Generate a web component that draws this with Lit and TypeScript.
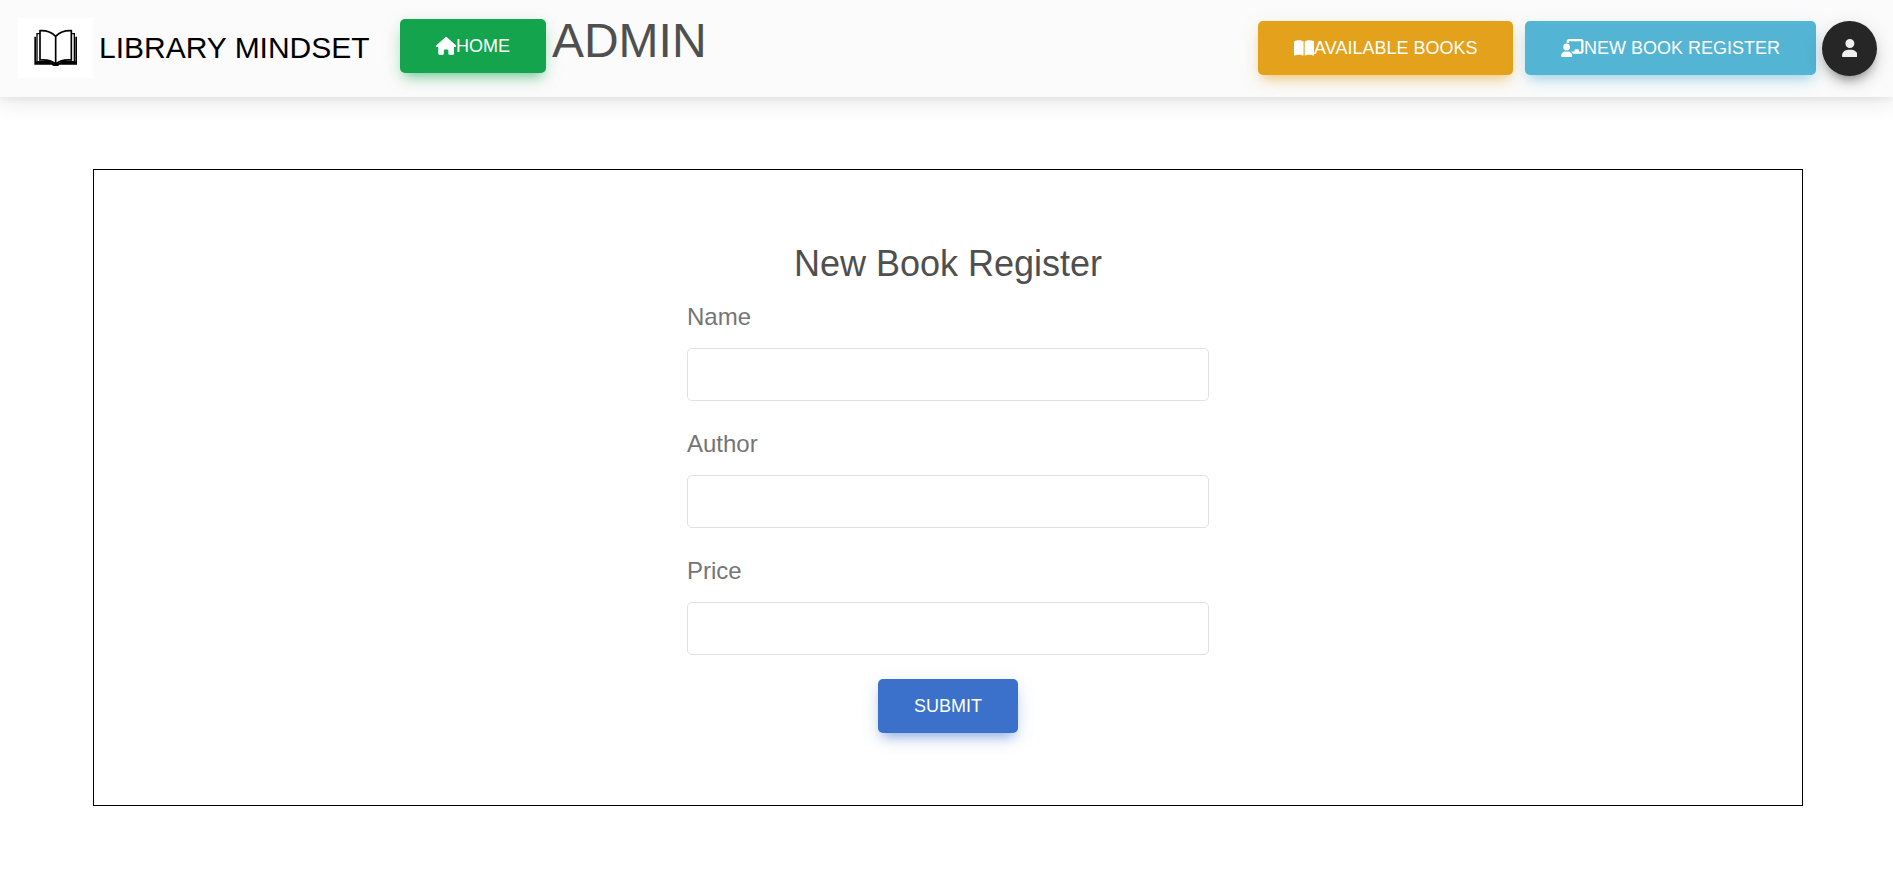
import { LitElement, html, css, svg } from "lit";
import { customElement } from "lit/decorators.js";

const icon = (width: number, path: string) => html`
  <svg class="icon" viewBox="0 0 ${width} 512" aria-hidden="true">${svg`<path d=${path} />`}</svg>
`;

const HOUSE =
  "M575.8 255.5c0 18-15 32.1-32 32.1h-32l.7 160.2c0 2.7-.2 5.4-.5 8.1V472c0 22.1-17.9 40-40 40H456c-1.1 0-2.2 0-3.3-.1c-1.4 .1-2.8 .1-4.2 .1H416 392c-22.1 0-40-17.9-40-40V448 384c0-17.7-14.3-32-32-32H256c-17.7 0-32 14.3-32 32v64 24c0 22.1-17.9 40-40 40H160 128.1c-1.5 0-3-.1-4.5-.2c-1.2 .1-2.4 .2-3.6 .2H104c-22.1 0-40-17.9-40-40V360c0-.9 0-1.9 .1-2.8V287.6H32c-18 0-32-14-32-32.1c0-9 3-17 10-24L266.4 8c7-7 15-8 22-8s15 2 21 7L564.8 231.5c8 7 12 15 11 24z";
const BOOK_OPEN =
  "M249.6 471.5c10.8 3.8 22.4-4.1 22.4-15.5V78.6c0-4.2-1.6-8.4-5-11C247.4 52 202.4 32 144 32C93.5 32 46.3 45.3 18.1 56.1C6.8 60.5 0 71.7 0 83.8V454.1c0 11.9 12.8 20.2 24.1 16.5C55.6 460.1 105.5 448 144 448c33.9 0 79 14 105.6 23.5zm76.8 0C353 462 398.1 448 432 448c38.5 0 88.4 12.1 119.9 22.6c11.3 3.8 24.1-4.6 24.1-16.5V83.8c0-12.1-6.8-23.3-18.1-27.6C529.7 45.3 482.5 32 432 32c-58.4 0-103.4 20-123 35.6c-3.3 2.6-5 6.8-5 11V456c0 11.4 11.7 19.3 22.4 15.5z";
const CHALKBOARD_USER =
  "M160 64c0-35.3 28.7-64 64-64H576c35.3 0 64 28.7 64 64V352c0 35.3-28.7 64-64 64H336.8c-11.8-25.5-29.9-47.5-52.4-64H384V320c0-17.7 14.3-32 32-32h64c17.7 0 32 14.3 32 32v32h64V64L224 64v49.1C205.2 102.2 183.3 96 160 96V64zm0 64a96 96 0 1 1 0 192 96 96 0 1 1 0-192zM133.3 352h53.3C260.3 352 320 411.7 320 485.3c0 14.7-11.9 26.7-26.7 26.7H26.7C11.9 512 0 500.1 0 485.3C0 411.7 59.7 352 133.3 352z";
const USER =
  "M224 256A128 128 0 1 0 224 0a128 128 0 1 0 0 256zm-45.7 48C79.8 304 0 383.8 0 482.3C0 498.7 13.3 512 29.7 512H418.3c16.4 0 29.7-13.3 29.7-29.7C448 383.8 368.2 304 269.7 304H178.3z";

@customElement("app-root")
export class AppRoot extends LitElement {
  static styles = css`
    :host {
      display: block;
      font-family: "Liberation Sans", Arial, sans-serif;
      color: #4f4f4f;
    }

    .navbar {
      display: flex;
      flex-wrap: wrap;
      align-items: center;
      justify-content: space-between;
      gap: 12px;
      padding: 12px 16px 13px 18px;
      background: #fbfbfb;
      box-shadow: 0 8px 20px 0 rgba(0, 0, 0, 0.08), 0 3px 6px rgba(0, 0, 0, 0.05);
    }
    .start,
    .end,
    .brand,
    .section {
      display: flex;
      align-items: center;
    }
    .brand {
      gap: 6px;
      margin-right: 30px;
      color: #000;
      font-size: 30px;
      line-height: 48px;
      text-decoration: none;
    }
    .logo {
      width: 75px;
      height: 60px;
      background: #fff;
    }
    .section {
      gap: 6px;
      padding-bottom: 4px;
    }
    .title {
      margin: 0 0 10px;
      font-size: 48px;
      font-weight: 400;
      line-height: 58px;
    }
    .end {
      gap: 12px;
    }
    .account {
      display: flex;
      align-items: center;
      gap: 6px;
    }

    .btn {
      display: inline-flex;
      align-items: center;
      justify-content: center;
      padding: 13px 36px;
      border: 0;
      border-radius: 5px;
      font-family: inherit;
      font-size: 18px;
      line-height: 28px;
      text-transform: uppercase;
      color: #fff;
      background: rgb(var(--tone));
      box-shadow: 0 8px 11px -5px rgba(var(--tone), 0.5), 0 5px 18px 0 rgba(var(--tone), 0.17);
      cursor: pointer;
    }
    .success {
      --tone: 20, 164, 77;
    }
    .warning {
      --tone: 228, 161, 27;
    }
    .info {
      --tone: 84, 180, 211;
    }
    .primary {
      --tone: 59, 113, 202;
    }
    .dark {
      --tone: 38, 38, 38;
    }
    .round {
      width: 55px;
      height: 55px;
      padding: 0;
      border-radius: 50%;
      color: #f0f0f0;
    }
    .icon {
      flex: none;
      height: 18px;
      fill: currentColor;
    }

    .card {
      display: flex;
      justify-content: center;
      margin: 72px 90px 64px 93px;
      padding: 72px 24px;
      border: 1px solid #000;
    }
    .form {
      display: flex;
      flex-direction: column;
      align-items: center;
      width: 100%;
      max-width: 522px;
    }
    .heading {
      margin: 0 0 12px;
      font-size: 36px;
      font-weight: 400;
      line-height: 44px;
    }
    .field {
      display: flex;
      flex-direction: column;
      gap: 12px;
      width: 100%;
      margin-bottom: 24px;
    }
    .label {
      font-size: 24px;
      line-height: 38px;
      color: #757575;
    }
    .input {
      box-sizing: border-box;
      width: 100%;
      height: 53px;
      padding: 8px 16px;
      border: 1px solid #e0e0e0;
      border-radius: 5px;
      font-family: inherit;
      font-size: 20px;
      color: #4f4f4f;
      background: #fff;
    }
  `;

  private fields = ["Name", "Author", "Price"];

  render() {
    return html`
      <header class="navbar">
        <div class="start">
          <a class="brand" href="#">
            <svg class="logo" viewBox="0 0 225 180" aria-hidden="true">
              <path
                d="M113 55C100 42 84 37 66 38V126C86 124 101 128 113 138C125 128 140 124 160 126V38C142 37 126 42 113 55V138"
                fill="none" stroke="#000" stroke-width="5" />
              <path d="M66 47H57V131H97M160 47H169V131H129" fill="none" stroke="#000" stroke-width="4" />
              <path
                d="M49 56H54V130L92 131Q104 132 113 139Q122 132 134 131L172 130V56H177V140H124Q122 144 118 144H108Q104 144 102 140H49Z" />
            </svg>
            <span>LIBRARY MINDSET</span>
          </a>
          <div class="section">
            <button class="btn success" type="button">${icon(576, HOUSE)}Home</button>
            <h1 class="title">ADMIN</h1>
          </div>
        </div>
        <nav class="end" aria-label="Admin">
          <button class="btn warning" type="button">${icon(576, BOOK_OPEN)}Available Books</button>
          <div class="account">
            <button class="btn info" type="button">${icon(640, CHALKBOARD_USER)}New Book Register</button>
            <button class="btn dark round" type="button" aria-label="Account">${icon(448, USER)}</button>
          </div>
        </nav>
      </header>
      <main class="card">
        <form class="form" @submit=${(e: Event) => e.preventDefault()}>
          <h2 class="heading">New Book Register</h2>
          ${this.fields.map(
            (name) => html`
              <div class="field">
                <label class="label" for=${name.toLowerCase()}>${name}</label>
                <input class="input" type="text" id=${name.toLowerCase()} name=${name.toLowerCase()} />
              </div>
            `
          )}
          <button class="btn primary" type="submit">Submit</button>
        </form>
      </main>
    `;
  }
}
